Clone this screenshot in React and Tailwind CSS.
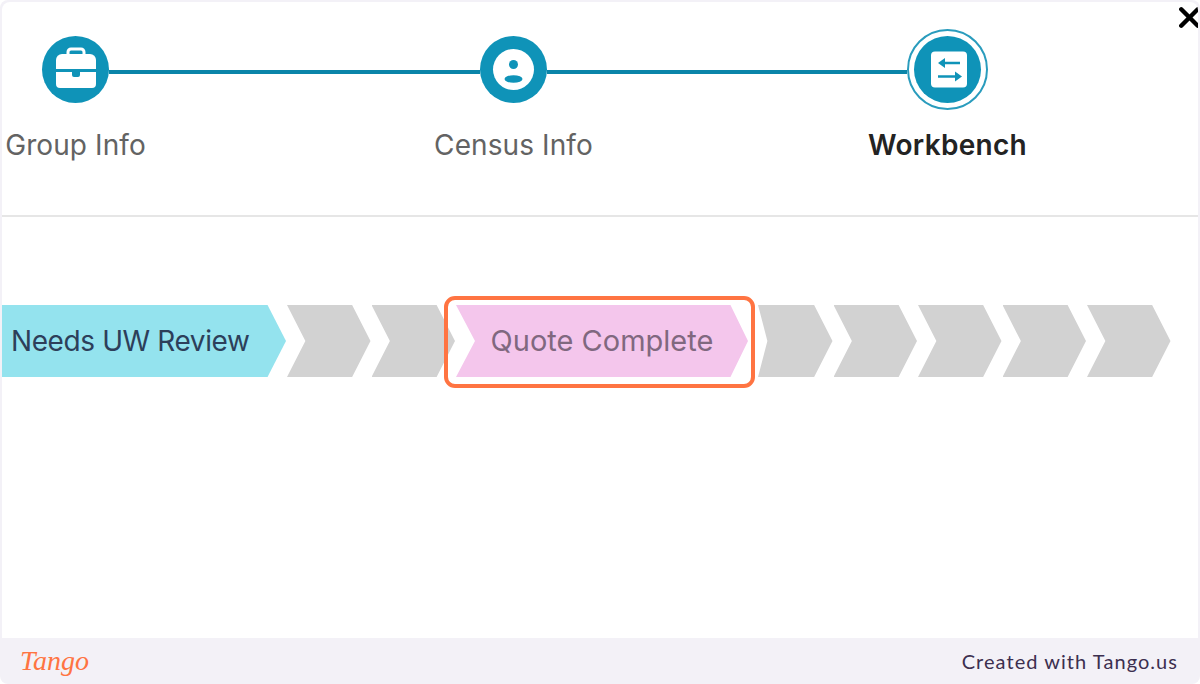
import React from "react";
import { X } from "lucide-react";

function Briefcase() {
  return (
    <svg width="67" height="67" viewBox="0 0 67 67">
      <path d="M26 18v-2a3 3 0 0 1 3-3h10a3 3 0 0 1 3 3v2" fill="none" stroke="#fff" strokeWidth="3" />
      <path d="M14 24a6 6 0 0 1 6-6h28a6 6 0 0 1 6 6v9H14z" fill="#fff" />
      <path d="M14 36h16v3a2 2 0 0 0 2 2h4a2 2 0 0 0 2-2v-3h16v12a4 4 0 0 1-4 4H18a4 4 0 0 1-4-4z" fill="#fff" />
    </svg>
  );
}

function Person() {
  return (
    <svg width="67" height="67" viewBox="0 0 67 67">
      <circle cx="33.5" cy="33.5" r="20.5" fill="#fff" />
      <circle cx="33.5" cy="28.5" r="4.5" fill="#0f93b8" />
      <ellipse cx="33.5" cy="43" rx="9" ry="3.8" fill="#0f93b8" />
    </svg>
  );
}

function Sliders() {
  return (
    <svg width="67" height="67" viewBox="0 0 67 67">
      <rect x="17" y="15.5" width="36" height="36" rx="4" fill="#fff" />
      <path d="M28 27h18" fill="none" stroke="#0f93b8" strokeWidth="2.4" />
      <path d="M24 27l7-5v10z" fill="#0f93b8" />
      <path d="M24 40.5h18" fill="none" stroke="#0f93b8" strokeWidth="2.4" />
      <path d="M48 40.5l-7-5v10z" fill="#0f93b8" />
    </svg>
  );
}

function Step({ label, active, children }) {
  return (
    <div className={active ? "flex w-[81px] flex-col items-center" : "flex w-[67px] flex-col items-center"}>
      <div className="flex h-[81px] items-center justify-center">
        <div className={active ? "rounded-full border-2 border-[#2a9cbd] p-[5px]" : ""}>
          <div className="h-[67px] w-[67px] rounded-full bg-[#0f93b8]">{children}</div>
        </div>
      </div>
      <div
        className={
          active
            ? "mt-[17px] whitespace-nowrap text-[28px] leading-[36px] font-semibold tracking-[0.3px] text-[#232323]"
            : "mt-[17px] whitespace-nowrap text-[28px] leading-[36px] tracking-[0.1px] text-[#636363]"
        }
      >
        {label}
      </div>
    </div>
  );
}

function Chevron() {
  return (
    <div className="h-[72px] w-[83.5px] bg-[#d2d2d2] [clip-path:polygon(0_0,78%_0,100%_50%,78%_100%,0_100%,22%_50%)]" />
  );
}

export default function App() {
  return (
    <div className="flex h-[684px] w-[1200px] flex-col overflow-hidden rounded-lg bg-[#f3f1f7] font-['Inter',sans-serif]">
      <div className="relative mx-[2px] mt-[2px] h-[636px] overflow-hidden rounded-t-lg bg-white">
        <X className="absolute top-[-1px] right-[-8px] h-[33px] w-[33px] text-black" strokeWidth={3.2} />

        <div className="h-[215px] border-b-2 border-[#e6e6e6] pt-[27px] pl-[40px]">
          <div className="flex items-start">
            <Step label="Group Info"><Briefcase /></Step>
            <div className="mt-[41px] h-1 w-[371px] bg-[#0a85a9]" />
            <Step label="Census Info"><Person /></Step>
            <div className="mt-[41px] h-1 w-[360px] bg-[#0a85a9]" />
            <Step label="Workbench" active><Sliders /></Step>
          </div>
        </div>

        <div className="mt-[88px] flex gap-[1px]">
          <div className="flex h-[72px] w-[284px] items-center bg-[#94e3ee] pl-[9px] text-[28px] tracking-[-0.4px] whitespace-nowrap text-[#2d3f5a] [clip-path:polygon(0_0,93.5%_0,100%_50%,93.5%_100%,0_100%)]">
            Needs UW Review
          </div>
          <Chevron />
          <Chevron />
          <div className="relative h-[72px] w-[292px]">
            <div className="flex h-full w-full items-center justify-center bg-[#f4c6ec] text-[29px] whitespace-nowrap text-[#80687f] [clip-path:polygon(0_0,94%_0,100%_50%,94%_100%,0_100%,6.5%_50%)]">
              Quote Complete
            </div>
            <div className="absolute top-[-9px] right-[-7px] bottom-[-11px] left-[-12px] rounded-[11px] border-[4px] border-[#ff7442]" />
          </div>
          {/* this one sits partly under the highlight, its corner is cut off */}
          <div className="h-[72px] w-[83.5px] bg-[#d2d2d2] [clip-path:polygon(9px_0,78%_0,100%_50%,78%_100%,9px_100%,22%_50%)]" />
          <Chevron />
          <Chevron />
          <Chevron />
          <Chevron />
        </div>
      </div>

      <div className="flex flex-1 items-center justify-between pr-[22px] pb-[1px] pl-[20px]">
        <span className="font-['Liberation_Serif',serif] text-[28px] leading-none text-[#ff7442] italic">Tango</span>
        <span className="font-['Lato',sans-serif] text-[20px] tracking-[1.05px] text-[#3c2f4f]">Created with Tango.us</span>
      </div>
    </div>
  );
}
